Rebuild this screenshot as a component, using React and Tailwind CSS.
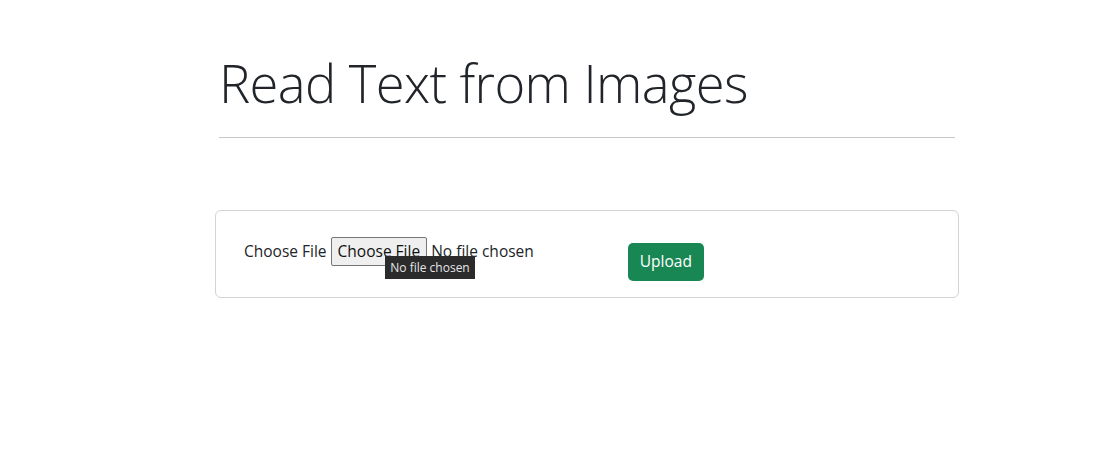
export default function App() {
  return (
    <div className="w-[1095px] h-[472px] bg-white text-[#212529]" style={{ fontFamily: '"Open Sans", "Noto Sans", sans-serif' }}>
      <div className="ml-[219px] w-[736px] pt-[51px]">
        <h1 className="text-[52.5px] font-light leading-[1.2] tracking-[-0.6px]">Read Text from Images</h1>
        <hr className="mt-[23px] border-0 h-px bg-[#c8c8c8]" />
        <div className="-ml-[4px] w-[744px] mt-[72px] h-[88px] border border-[#d3d3d3] rounded-[6px] flex items-start pl-[28px]">
          <div className="relative flex items-center mt-[26px] text-[15.5px]">
            <span>Choose File</span>
            <span className="ml-[4px] h-[29px] px-[6px] flex items-center border border-[#767676] rounded-[2px] bg-[#efefef] text-[#111]">Choose File</span>
            <span className="ml-[4px]">No file chosen</span>
            <div className="absolute left-[141px] top-[19px] w-[90px] h-[23px] bg-[#2b2b2b] text-[#e6e6e6] text-[12px] flex items-center justify-center">No file chosen</div>
          </div>
          <button className="ml-[94px] mt-[32px] h-[38px] px-[12px] rounded-[5px] bg-[#198754] text-white text-[15.5px]">Upload</button>
        </div>
      </div>
    </div>
  );
}
